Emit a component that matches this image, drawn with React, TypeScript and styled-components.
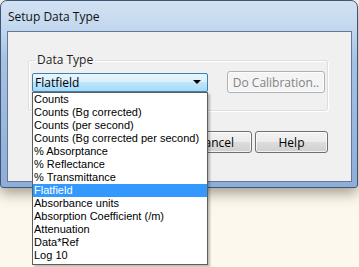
import React from 'react';
import styled, { createGlobalStyle } from 'styled-components';

const GlobalStyle = createGlobalStyle`
  html, body {
    margin: 0;
    padding: 0;
    background: #fdf8ee;
  }
`;

const items = [
  'Counts',
  'Counts (Bg corrected)',
  'Counts (per second)',
  'Counts (Bg corrected per second)',
  '% Absorptance',
  '% Reflectance',
  '% Transmittance',
  'Flatfield',
  'Absorbance units',
  'Absorption Coefficient (/m)',
  'Attenuation',
  'Data*Ref',
  'Log 10',
];

export default function App() {
  const selected = 'Flatfield';
  return (
    <>
      <GlobalStyle />
      <StyledPage>
        <StyledWindow>
          <StyledTitleBar>Setup Data Type</StyledTitleBar>
          <StyledClient>
            <StyledGroup>
              <StyledLegend>Data Type</StyledLegend>
              <StyledGroupRow>
                <StyledCombo>
                  <span>{selected}</span>
                  <StyledArrow />
                </StyledCombo>
                <StyledButton $wide disabled>Do Calibration..</StyledButton>
              </StyledGroupRow>
            </StyledGroup>

            <StyledButtonRow>
              <StyledButton>OK</StyledButton>
              <StyledButton>Cancel</StyledButton>
              <StyledButton>Help</StyledButton>
            </StyledButtonRow>
          </StyledClient>
        </StyledWindow>

        <StyledList>
          {items.map((item) => (
            <StyledItem key={item} $active={item === selected}>
              {item}
            </StyledItem>
          ))}
        </StyledList>
      </StyledPage>
    </>
  );
}

const StyledPage = styled.div`
  position: relative;
  width: 359px;
  height: 267px;
  overflow: hidden;
  background: #fdf8ee;
`;

const StyledWindow = styled.div`
  width: 358px;
  height: 188px;
  box-sizing: border-box;
  display: flex;
  flex-direction: column;
  border: 1px solid #3d5676;
  border-radius: 7px 7px 3px 3px;
  background: linear-gradient(to bottom, #d3e2f3 0px, #c2d7ee 28px, #a7c1e2 60px, #8eaed8 100%);
  box-shadow: 0 5px 14px rgba(70, 60, 40, 0.5);
`;

const StyledTitleBar = styled.div`
  height: 30px;
  flex: none;
  display: flex;
  align-items: center;
  padding-left: 7px;
  font-family: 'Open Sans', sans-serif;
  font-size: 12px;
  color: #111;
`;

const StyledClient = styled.div`
  flex: 1;
  margin: 0 5px 5px 6px;
  border: 1px solid #62799b;
  background: #f0f0f0;
  padding: 0 23px 0 20px;
  display: flex;
  flex-direction: column;
`;

const StyledGroup = styled.fieldset`
  margin: 21px 0 0 0;
  padding: 4px 2px 17px 3px;
  width: 299px;
  box-sizing: border-box;
  border: 1px solid #d5dfe5;
  border-radius: 3px;
  box-shadow: inset 1px 1px 0 #fff, 1px 1px 0 #fff;
`;

const StyledLegend = styled.legend`
  margin-left: 3px;
  padding: 0 2px;
  font-family: 'Open Sans', sans-serif;
  font-size: 12px;
  line-height: 14px;
  color: #1e1e1e;
`;

const StyledGroupRow = styled.div`
  display: flex;
  align-items: center;
  gap: 19px;
`;

const StyledCombo = styled.div`
  width: 176px;
  height: 19px;
  box-sizing: border-box;
  display: flex;
  align-items: center;
  justify-content: space-between;
  padding: 0 6px 0 2px;
  border: 1px solid #3c7fb1;
  border-radius: 2px;
  background: linear-gradient(to bottom, #eaf6fd 0%, #d9f0fc 45%, #bee6fd 50%, #a7d9f5 100%);
  font-family: 'Open Sans', sans-serif;
  font-size: 12px;
  color: #000;
`;

const StyledArrow = styled.span`
  width: 0;
  height: 0;
  border-left: 4px solid transparent;
  border-right: 4px solid transparent;
  border-top: 4px solid #000;
`;

const StyledButton = styled.button<{ $wide?: boolean }>`
  width: ${(p) => (p.$wide ? '98px' : '73px')};
  height: 22px;
  box-sizing: border-box;
  padding: 0;
  border: 1px solid ${(p) => (p.disabled ? '#adb2b5' : '#707070')};
  border-radius: 3px;
  background: ${(p) =>
    p.disabled
      ? '#f4f4f4'
      : 'linear-gradient(to bottom, #f2f2f2 0%, #ebebeb 50%, #dddddd 51%, #cfcfcf 100%)'};
  box-shadow: inset 0 0 0 1px rgba(255, 255, 255, 0.7);
  font-family: 'Open Sans', sans-serif;
  font-size: 12px;
  color: ${(p) => (p.disabled ? '#838383' : '#000')};
`;

const StyledButtonRow = styled.div`
  margin-top: 20px;
  display: flex;
  justify-content: flex-end;
  gap: 3px;
`;

const StyledList = styled.div`
  position: absolute;
  left: 32px;
  top: 92px;
  width: 176px;
  height: 173px;
  box-sizing: border-box;
  border: 1px solid #5e5e5e;
  background: #fff;
  box-shadow: 2px 2px 2px rgba(0, 0, 0, 0.25);
`;

const StyledItem = styled.div<{ $active: boolean }>`
  height: 13px;
  line-height: 13px;
  padding-left: 1px;
  white-space: nowrap;
  font-family: 'Liberation Sans', sans-serif;
  font-size: 11px;
  background: ${(p) => (p.$active ? '#3399ff' : 'transparent')};
  color: ${(p) => (p.$active ? '#fff' : '#000')};
`;
